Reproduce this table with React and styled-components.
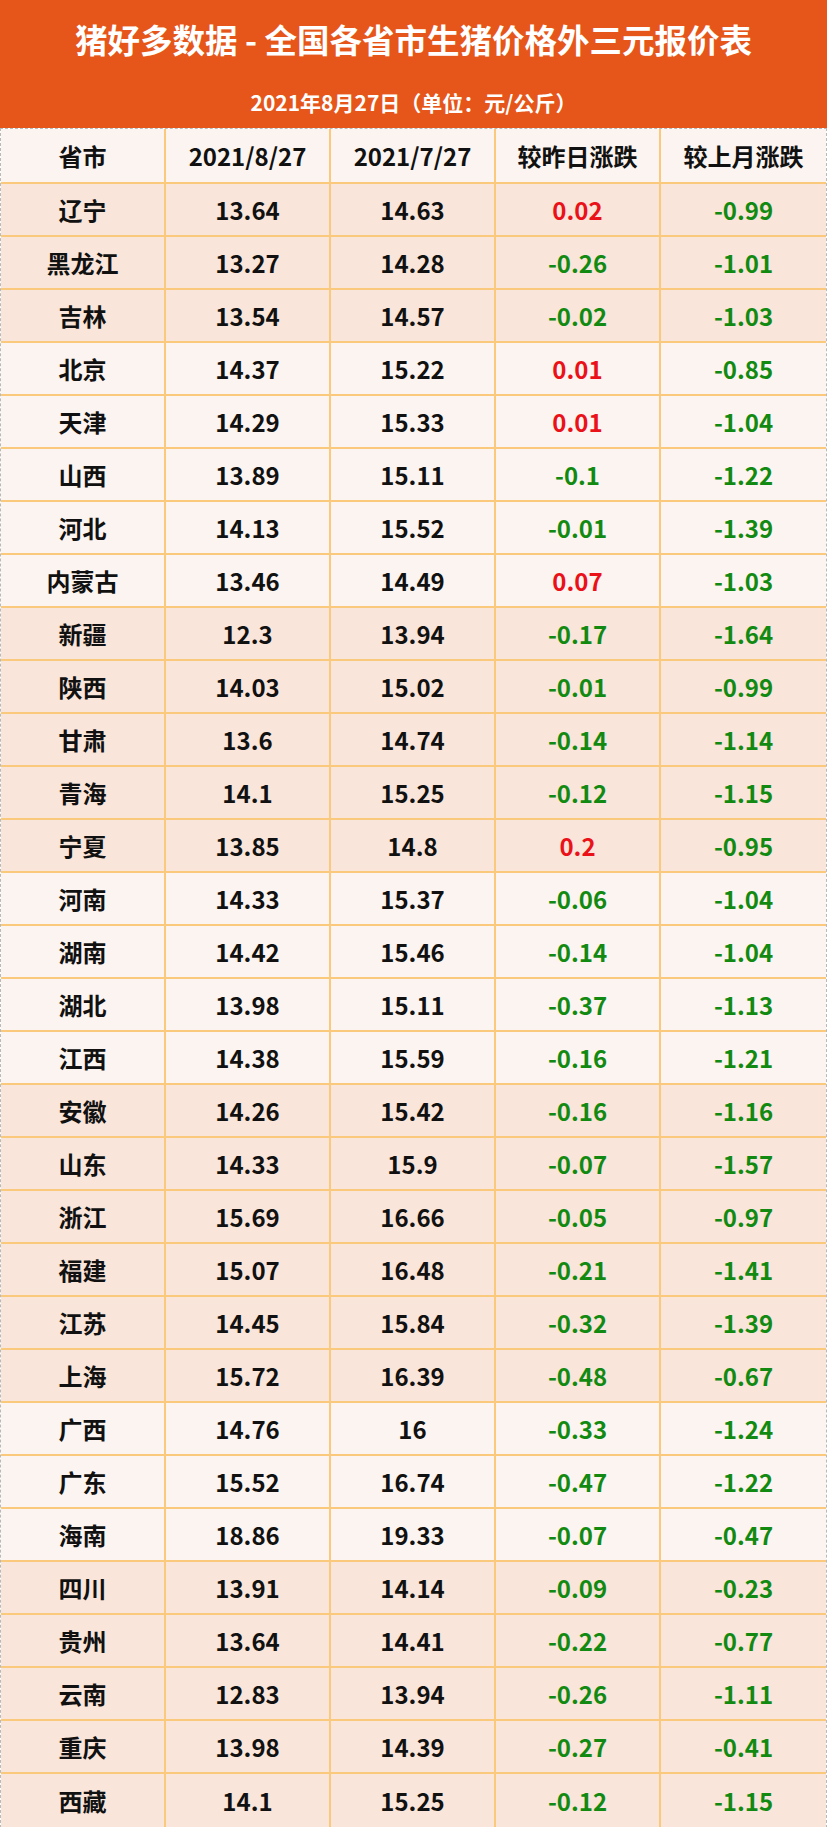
import React from 'react';
import styled, { createGlobalStyle } from 'styled-components';

const GlobalStyle = createGlobalStyle`
  html, body {
    margin: 0;
    padding: 0;
    background: #ffffff;
  }
  body {
    font-family: "Noto Sans CJK SC", "Noto Sans", sans-serif;
  }
`;

const LINE = '#fbc97c';
const PINK = '#f9e5da';
const LIGHT = '#fcf4f0';

const Page = styled.div`
  width: 827px;
`;

const Banner = styled.header`
  height: 128px;
  box-sizing: border-box;
  background-color: #e65519;
  color: #ffffff;
  display: flex;
  flex-direction: column;
  align-items: center;
  padding-top: 19px;
`;

const Title = styled.h1`
  margin: 0;
  font-size: 32.5px;
  line-height: 40px;
  font-weight: 700;
`;

const Subtitle = styled.div`
  margin-top: 30px;
  font-size: 21px;
  line-height: 26px;
  font-weight: 700;
`;

const Table = styled.div`
  display: grid;
  grid-template-columns: repeat(5, 1fr);
  border: 1px dashed #b9b9b9;
`;

const Cell = styled.div`
  height: ${(p) => (p.$head ? 55 : 53)}px;
  box-sizing: border-box;
  display: flex;
  align-items: center;
  justify-content: center;
  font-size: 24px;
  font-weight: 700;
  color: ${(p) => p.$color || '#111111'};
  background-color: ${(p) => p.$bg};
  border-right: ${(p) => (p.$lastCol ? 'none' : `2px solid ${LINE}`)};
  border-bottom: ${(p) => (p.$lastRow ? 'none' : `2px solid ${LINE}`)};
`;

const groups = [
  [
    ['辽宁', '13.64', '14.63', '0.02', '-0.99'],
    ['黑龙江', '13.27', '14.28', '-0.26', '-1.01'],
    ['吉林', '13.54', '14.57', '-0.02', '-1.03'],
  ],
  [
    ['北京', '14.37', '15.22', '0.01', '-0.85'],
    ['天津', '14.29', '15.33', '0.01', '-1.04'],
    ['山西', '13.89', '15.11', '-0.1', '-1.22'],
    ['河北', '14.13', '15.52', '-0.01', '-1.39'],
    ['内蒙古', '13.46', '14.49', '0.07', '-1.03'],
  ],
  [
    ['新疆', '12.3', '13.94', '-0.17', '-1.64'],
    ['陕西', '14.03', '15.02', '-0.01', '-0.99'],
    ['甘肃', '13.6', '14.74', '-0.14', '-1.14'],
    ['青海', '14.1', '15.25', '-0.12', '-1.15'],
    ['宁夏', '13.85', '14.8', '0.2', '-0.95'],
  ],
  [
    ['河南', '14.33', '15.37', '-0.06', '-1.04'],
    ['湖南', '14.42', '15.46', '-0.14', '-1.04'],
    ['湖北', '13.98', '15.11', '-0.37', '-1.13'],
    ['江西', '14.38', '15.59', '-0.16', '-1.21'],
  ],
  [
    ['安徽', '14.26', '15.42', '-0.16', '-1.16'],
    ['山东', '14.33', '15.9', '-0.07', '-1.57'],
    ['浙江', '15.69', '16.66', '-0.05', '-0.97'],
    ['福建', '15.07', '16.48', '-0.21', '-1.41'],
    ['江苏', '14.45', '15.84', '-0.32', '-1.39'],
    ['上海', '15.72', '16.39', '-0.48', '-0.67'],
  ],
  [
    ['广西', '14.76', '16', '-0.33', '-1.24'],
    ['广东', '15.52', '16.74', '-0.47', '-1.22'],
    ['海南', '18.86', '19.33', '-0.07', '-0.47'],
  ],
  [
    ['四川', '13.91', '14.14', '-0.09', '-0.23'],
    ['贵州', '13.64', '14.41', '-0.22', '-0.77'],
    ['云南', '12.83', '13.94', '-0.26', '-1.11'],
    ['重庆', '13.98', '14.39', '-0.27', '-0.41'],
    ['西藏', '14.1', '15.25', '-0.12', '-1.15'],
  ],
];

const headers = ['省市', '2021/8/27', '2021/7/27', '较昨日涨跌', '较上月涨跌'];

// up = red, down = green
const changeColor = (v) => (v.startsWith('-') ? '#128a12' : '#ea1118');

// regions alternate between the two row tints
const rows = groups.flatMap((g, gi) => g.map((r) => ({ cells: r, bg: gi % 2 === 0 ? PINK : LIGHT })));

export default function App() {
  return (
    <Page>
      <GlobalStyle />
      <Banner>
        <Title>猪好多数据 - 全国各省市生猪价格外三元报价表</Title>
        <Subtitle>2021年8月27日（单位：元/公斤）</Subtitle>
      </Banner>
      <Table>
        {headers.map((h, i) => (
          <Cell key={h} $head $bg={LIGHT} $lastCol={i === 4}>
            {h}
          </Cell>
        ))}
        {rows.map((row, ri) =>
          row.cells.map((v, ci) => (
            <Cell
              key={`${ri}-${ci}`}
              $bg={row.bg}
              $color={ci >= 3 ? changeColor(v) : undefined}
              $lastCol={ci === 4}
              $lastRow={ri === rows.length - 1}
            >
              {v}
            </Cell>
          ))
        )}
      </Table>
    </Page>
  );
}
